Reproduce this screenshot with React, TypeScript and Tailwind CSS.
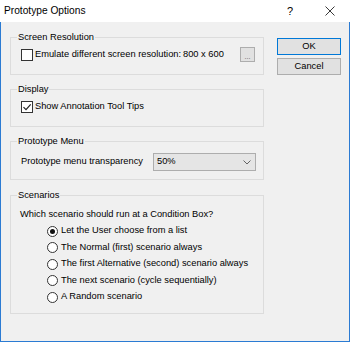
import React from "react";

function CheckBox({ checked }: { checked?: boolean }) {
  return (
    <div className="w-[12px] h-[12px] border border-[#333333] bg-white flex items-center justify-center shrink-0">
      {checked && (
        <svg width="10" height="10" viewBox="0 0 10 10">
          <path d="M1.5 5.2 L4 7.7 L8.7 2.3" fill="none" stroke="#222" strokeWidth="1.2" />
        </svg>
      )}
    </div>
  );
}

function Radio({ checked, label }: { checked?: boolean; label: string }) {
  return (
    <div className="h-[16.5px] flex items-center gap-[3px]">
      <div className="w-[11px] h-[11px] rounded-full border border-[#333333] bg-white flex items-center justify-center shrink-0">
        {checked && <div className="w-[5px] h-[5px] rounded-full bg-[#111111]" />}
      </div>
      <span className="whitespace-nowrap">{label}</span>
    </div>
  );
}

function Group({ title, h, children }: { title: string; h: string; children: React.ReactNode }) {
  return (
    <div className={`border border-[#dcdcdc] flex flex-col ${h}`}>
      <span className="self-start ml-[6px] px-[1px] -mt-[7px] h-[12px] leading-[12px] bg-[#f0f0f0] whitespace-nowrap">
        {title}
      </span>
      {children}
    </div>
  );
}

export default function App() {
  return (
    <div className="w-[350px] h-[342px] flex flex-col font-['Liberation_Sans',Arial,sans-serif] text-[9.3px] text-black">
      <div className="h-[22px] bg-white flex items-center pl-[4px] shrink-0">
        <span className="text-[10.2px] whitespace-nowrap">Prototype Options</span>
        <div className="flex-1" />
        <div className="w-[40px] h-[22px] flex items-center justify-center text-[11px]">?</div>
        <div className="w-[40px] h-[22px] flex items-center justify-center">
          <svg width="10" height="10" viewBox="0 0 10 10">
            <path d="M0.5 0.5 L9.5 9.5 M9.5 0.5 L0.5 9.5" stroke="#222" strokeWidth="0.9" fill="none" />
          </svg>
        </div>
      </div>
      <div className="flex-1 bg-[#f0f0f0] border-x border-b border-[#2b7bd3] flex">
        <div className="pl-[9px] pt-[15px] w-[263px] flex flex-col shrink-0">
          <Group title="Screen Resolution" h="h-[38px]">
            <div className="mt-[4px] pl-[10px] h-[15px] flex items-center">
              <div className="w-[162px] flex items-center gap-[2px]">
                <CheckBox />
                <span className="whitespace-nowrap">Emulate different screen resolution:</span>
              </div>
              <span className="w-[57px] whitespace-nowrap">800 x 600</span>
              <div className="w-[15px] h-[15px] border border-[#adadad] bg-[#e1e1e1] flex items-end justify-center text-[7px] leading-[9px] text-[#555]">
                ...
              </div>
            </div>
          </Group>
          <div className="mt-[14px]">
            <Group title="Display" h="h-[38px]">
              <div className="mt-[4px] pl-[10px] h-[15px] flex items-center gap-[2px]">
                <CheckBox checked />
                <span className="whitespace-nowrap">Show Annotation Tool Tips</span>
              </div>
            </Group>
          </div>
          <div className="mt-[14px]">
            <Group title="Prototype Menu" h="h-[39px]">
              <div className="mt-[6px] pl-[10px] h-[18px] flex items-center">
                <span className="w-[132px] whitespace-nowrap">Prototype menu transparency</span>
                <div className="w-[103px] h-[18px] border border-[#adadad] bg-[#e5e5e5] flex items-center pl-[3px] pr-[4px]">
                  <span className="flex-1">50%</span>
                  <svg width="8" height="5" viewBox="0 0 8 5">
                    <path d="M0.5 0.5 L4 4 L7.5 0.5" fill="none" stroke="#555" strokeWidth="0.9" />
                  </svg>
                </div>
              </div>
            </Group>
          </div>
          <div className="mt-[15px]">
            <Group title="Scenarios" h="h-[119px]">
              <div className="mt-[7px] pl-[9px] h-[12px] leading-[12px] whitespace-nowrap">
                Which scenario should run at a Condition Box?
              </div>
              <div className="mt-[3px] pl-[36px] flex flex-col">
                <Radio checked label="Let the User choose from a list" />
                <Radio label="The Normal (first) scenario always" />
                <Radio label="The first Alternative (second) scenario always" />
                <Radio label="The next scenario (cycle sequentially)" />
                <Radio label="A Random scenario" />
              </div>
            </Group>
          </div>
        </div>
        <div className="ml-[13px] pt-[16px] flex flex-col gap-[3px]">
          <div className="w-[64px] h-[17px] border border-[#0078d7] bg-[#e1e1e1] flex items-center justify-center">
            OK
          </div>
          <div className="w-[64px] h-[17px] border border-[#adadad] bg-[#e1e1e1] flex items-center justify-center">
            Cancel
          </div>
        </div>
      </div>
    </div>
  );
}
